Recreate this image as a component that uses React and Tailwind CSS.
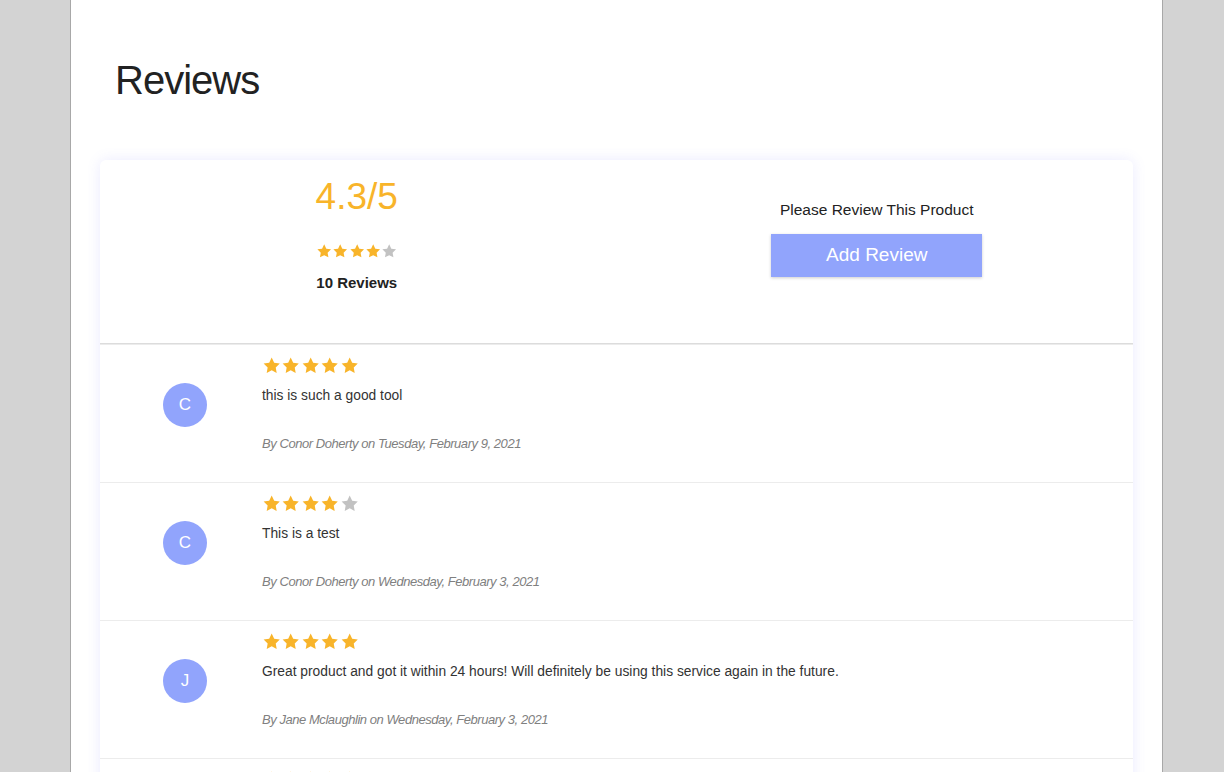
import React from 'react';

const reviews = [
  {
    initial: 'C',
    rating: 5,
    text: 'this is such a good tool',
    author: 'Conor Doherty',
    date: 'Tuesday, February 9, 2021',
  },
  {
    initial: 'C',
    rating: 4,
    text: 'This is a test',
    author: 'Conor Doherty',
    date: 'Wednesday, February 3, 2021',
  },
  {
    initial: 'J',
    rating: 5,
    text: 'Great product and got it within 24 hours! Will definitely be using this service again in the future.',
    author: 'Jane Mclaughlin',
    date: 'Wednesday, February 3, 2021',
  },
];

const STAR = 'M12 2l3.09 6.26L22 9.27l-5 4.87 1.18 6.88L12 17.77l-6.18 3.25L7 14.14 2 9.27l6.91-1.01L12 2z';

// fila de estrelas, cheias até "value"
function Stars({ value, size }) {
  return (
    <div className="flex">
      {[1, 2, 3, 4, 5].map(i => (
        <svg key={i} width={size} height={size} viewBox="0 0 24 24">
          <path d={STAR} fill={i <= value ? '#f8b42a' : '#c2c2c2'} />
        </svg>
      ))}
    </div>
  );
}

function ReviewRow({ review }) {
  return (
    <div className="flex border-t border-[#ececec] pl-[63px] h-[138px]">
      <div className="mt-[38px] w-[44px] h-[44px] rounded-full bg-[#91a4fc] text-white text-[17px] flex items-center justify-center shrink-0">
        {review.initial}
      </div>
      <div className="ml-[55px] pt-[11px]">
        <Stars value={review.rating} size={19.4} />
        <p className="mt-[11px] text-[13.8px] leading-[20px] text-[#333]">{review.text}</p>
        <p className="mt-[29px] text-[13px] leading-[18px] italic text-[#808080] tracking-[-0.45px]">
          By {review.author} on {review.date}
        </p>
      </div>
    </div>
  );
}

export default function App() {
  return (
    <div className="min-h-screen bg-[#d3d3d3] font-['Liberation_Sans',Arial,sans-serif]">
      <div className="ml-[70px] w-[1093px] min-h-screen bg-white border-x border-[#a8a8a8] px-[29px] pb-10">
        <h1 className="pt-[56px] pl-[15px] text-[40px] leading-[48px] tracking-[-1px] text-[#222]">Reviews</h1>

        <div className="mt-[56px] bg-white rounded-md shadow-[0_0_14px_rgba(110,110,255,0.14)] overflow-hidden">
          {/* resumo + botão */}
          <div className="grid grid-cols-2 h-[184px] border-b border-[#dcdcdc]">
            <div className="flex flex-col items-center pt-[15px] pr-[3px]">
              <div className="text-[37px] leading-[44px] text-[#f8b42a]">4.3/5</div>
              <div className="mt-[24px]">
                <Stars value={4} size={16.4} />
              </div>
              <div className="mt-[14px] text-[15px] leading-[20px] font-bold text-[#222]">10 Reviews</div>
            </div>
            <div className="flex flex-col items-center pt-[39px] pl-[4px]">
              <div className="text-[15.5px] leading-[22px] text-[#222]">Please Review This Product</div>
              <button className="mt-[13px] w-[211px] h-[43px] bg-[#91a4fc] text-white text-[19px] shadow-[0_1px_3px_rgba(0,0,0,0.2)]">
                Add Review
              </button>
            </div>
          </div>

          {reviews.map((r, i) => (
            <ReviewRow key={i} review={r} />
          ))}

          {/* próxima avaliação, só o topo aparece */}
          <div className="border-t border-[#ececec] pl-[162px] pt-[11px] h-[40px]">
            <Stars value={5} size={19.4} />
          </div>
        </div>
      </div>
    </div>
  );
}
